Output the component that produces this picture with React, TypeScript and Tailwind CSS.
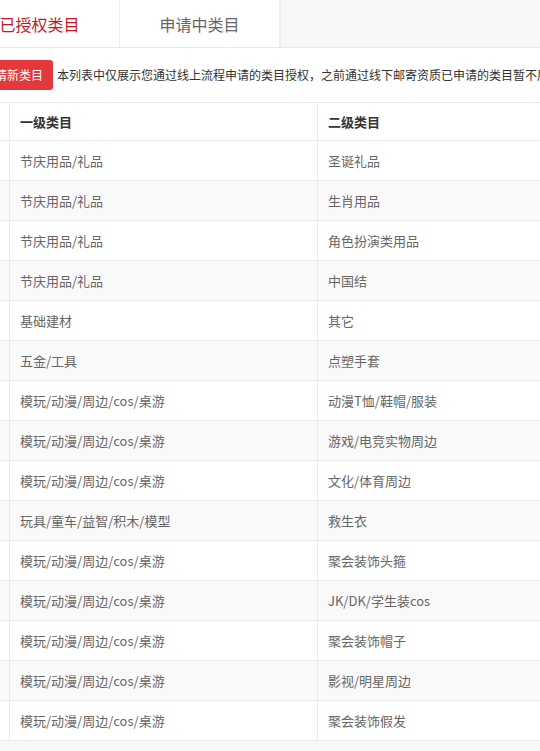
import React from "react";

const rows: [string, string][] = [
  ["节庆用品/礼品", "圣诞礼品"],
  ["节庆用品/礼品", "生肖用品"],
  ["节庆用品/礼品", "角色扮演类用品"],
  ["节庆用品/礼品", "中国结"],
  ["基础建材", "其它"],
  ["五金/工具", "点塑手套"],
  ["模玩/动漫/周边/cos/桌游", "动漫T恤/鞋帽/服装"],
  ["模玩/动漫/周边/cos/桌游", "游戏/电竞实物周边"],
  ["模玩/动漫/周边/cos/桌游", "文化/体育周边"],
  ["玩具/童车/益智/积木/模型", "救生衣"],
  ["模玩/动漫/周边/cos/桌游", "聚会装饰头箍"],
  ["模玩/动漫/周边/cos/桌游", "JK/DK/学生装cos"],
  ["模玩/动漫/周边/cos/桌游", "聚会装饰帽子"],
  ["模玩/动漫/周边/cos/桌游", "影视/明星周边"],
  ["模玩/动漫/周边/cos/桌游", "聚会装饰假发"],
];

export default function App() {
  return (
    <div
      className="relative w-[540px] h-[751px] overflow-hidden bg-[#f7f7f7]"
      style={{ fontFamily: '"Microsoft YaHei", "Noto Sans CJK SC", "Noto Sans", sans-serif' }}
    >
      <div className="ml-[-40px] w-[800px]">
        {/* Tabs */}
        <div className="flex h-[48px] bg-[#f7f7f7] border-b border-[#e8e8e8]">
          <div className="w-[160px] h-full bg-white border-r border-[#ececec] flex items-center justify-center text-[16px] text-[#c81623]">
            已授权类目
          </div>
          <div className="w-[161px] h-full bg-white border-r-2 border-[#ececec] flex items-center justify-center text-[16px] text-[#666]">
            申请中类目
          </div>
        </div>
        {/* Notice */}
        <div className="h-[54px] bg-white flex items-center pl-[13px]">
          <div className="h-[30px] px-[10px] rounded-[3px] bg-[#e4393c] text-white text-[12px] flex items-center">
            申请新类目
          </div>
          <div className="ml-[4px] text-[12px] text-[#333] whitespace-nowrap">
            本列表中仅展示您通过线上流程申请的类目授权，之前通过线下邮寄资质已申请的类目暂不展示
          </div>
        </div>
        {/* Table */}
        <div className="bg-white border-t border-[#eaeaea]">
          <div className="flex h-[38px] border-b border-[#eaeaea] text-[13px] font-bold text-[#333]">
            <div className="w-[50px] border-r border-[#eaeaea]" />
            <div className="w-[308px] border-r border-[#eaeaea] flex items-center pl-[10px]">一级类目</div>
            <div className="flex-1 flex items-center pl-[10px]">二级类目</div>
          </div>
          {rows.map(([a, b], i) => (
            <div
              key={i}
              className={`flex h-[40px] border-b border-[#eaeaea] text-[13px] text-[#666] ${
                i % 2 === 1 ? "bg-[#f9f9f9]" : "bg-white"
              }`}
            >
              <div className="w-[50px] border-r border-[#eaeaea]" />
              <div className="w-[308px] border-r border-[#eaeaea] flex items-center pl-[10px]">{a}</div>
              <div className="flex-1 flex items-center pl-[10px]">{b}</div>
            </div>
          ))}
        </div>
      </div>
    </div>
  );
}
